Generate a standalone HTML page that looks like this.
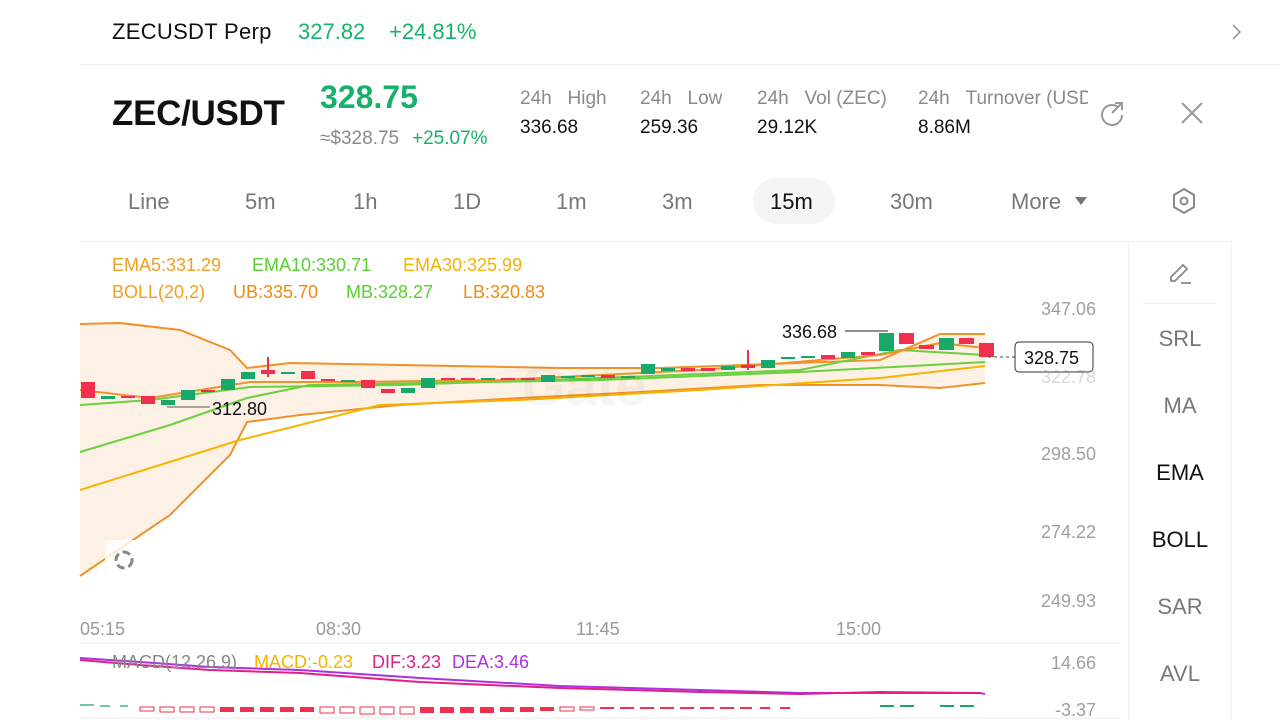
<!DOCTYPE html>
<html><head><meta charset="utf-8"><style>
*{margin:0;padding:0;box-sizing:border-box}
body{width:1280px;height:720px;background:#fff;font-family:"Liberation Sans",sans-serif;position:relative;overflow:hidden;color:#111}
.a{position:absolute;white-space:nowrap}
.g{color:#17b26a}
.gr{color:#8a8a8a}
.tab{position:absolute;top:189px;font-size:22px;color:#777}
.rp{position:absolute;left:1130px;width:100px;text-align:center;font-size:22px;color:#777}
</style></head><body>
<div class="a" style="left:112px;top:19px;font-size:22px;letter-spacing:0.3px">ZECUSDT Perp</div>
<div class="a g" style="left:298px;top:19px;font-size:22px">327.82</div>
<div class="a g" style="left:389px;top:19px;font-size:22px">+24.81%</div>
<svg class="a" style="left:1230px;top:23px" width="14" height="18"><path d="M3 2l7 7-7 7" stroke="#999" stroke-width="1.6" fill="none"/></svg>
<div class="a" style="left:80px;top:64px;width:1200px;height:1px;background:#eee"></div>
<div class="a" style="left:112px;top:94px;font-size:35px;font-weight:bold;letter-spacing:-0.3px">ZEC/USDT</div>
<div class="a g" style="left:320px;top:79px;font-size:32px;font-weight:bold">328.75</div>
<div class="a gr" style="left:320px;top:128px;font-size:19px">≈$328.75</div>
<div class="a g" style="left:412px;top:128px;font-size:19px">+25.07%</div>
<div class="a gr" style="left:520px;top:88px;font-size:19px">24h&nbsp;&nbsp;&nbsp;High</div>
<div class="a" style="left:520px;top:117px;font-size:19px">336.68</div>
<div class="a gr" style="left:640px;top:88px;font-size:19px">24h&nbsp;&nbsp;&nbsp;Low</div>
<div class="a" style="left:640px;top:117px;font-size:19px">259.36</div>
<div class="a gr" style="left:757px;top:88px;font-size:19px">24h&nbsp;&nbsp;&nbsp;Vol (ZEC)</div>
<div class="a" style="left:757px;top:117px;font-size:19px">29.12K</div>
<div class="a gr" style="left:918px;top:88px;font-size:19px;width:170px;overflow:hidden">24h&nbsp;&nbsp;&nbsp;Turnover (USDT)</div>
<div class="a" style="left:918px;top:117px;font-size:19px">8.86M</div>
<svg class="a" style="left:1098px;top:100px" width="28" height="28" fill="none" stroke="#999" stroke-width="2"><path d="M20 7A10 10 0 1 0 24 15"/><path d="M14 13L24 3M17 3h7v7"/></svg>
<svg class="a" style="left:1180px;top:101px" width="24" height="24" stroke="#999" stroke-width="2"><path d="M2 2l20 20M22 2L2 22"/></svg>
<div class="tab" style="left:128px">Line</div>
<div class="tab" style="left:245px">5m</div>
<div class="tab" style="left:353px">1h</div>
<div class="tab" style="left:453px">1D</div>
<div class="tab" style="left:556px">1m</div>
<div class="tab" style="left:662px">3m</div>
<div class="a" style="left:753px;top:178px;width:82px;height:46px;border-radius:23px;background:#f4f4f4"></div>
<div class="tab" style="left:770px;color:#111">15m</div>
<div class="tab" style="left:890px">30m</div>
<div class="tab" style="left:1011px">More</div>
<svg class="a" style="left:1075px;top:196px" width="12" height="10"><path d="M0 1h12L6 9z" fill="#777"/></svg>
<svg class="a" style="left:1170px;top:186px" width="28" height="30" fill="none" stroke="#888" stroke-width="2"><path d="M14 3l10 6v12l-10 6-10-6V9z"/><circle cx="14" cy="15" r="3.5"/></svg>
<div class="a" style="left:80px;top:241px;width:1152px;height:1px;background:#eee"></div>
<div class="a" style="left:1128px;top:241px;width:1px;height:479px;background:#eee"></div>
<div class="a" style="left:1231px;top:241px;width:1px;height:479px;background:#f2f2f2"></div>
<div class="a" style="left:1143px;top:303px;width:73px;height:1px;background:#eee"></div>
<svg class="a" style="left:1168px;top:260px" width="26" height="26" fill="none" stroke="#888" stroke-width="1.8"><path d="M3 21v-4L15 5l4 4L7 21z"/><path d="M13 23h10"/></svg>
<div class="rp" style="top:326px">SRL</div>
<div class="rp" style="top:393px">MA</div>
<div class="rp" style="top:460px;color:#111">EMA</div>
<div class="rp" style="top:527px;color:#111">BOLL</div>
<div class="rp" style="top:594px">SAR</div>
<div class="rp" style="top:661px">AVL</div>
<div class="a" style="left:112px;top:255px;font-size:18px;color:#f0a020">EMA5:331.29</div>
<div class="a" style="left:252px;top:255px;font-size:18px;color:#5ad030">EMA10:330.71</div>
<div class="a" style="left:403px;top:255px;font-size:18px;color:#f3b300">EMA30:325.99</div>
<div class="a" style="left:112px;top:282px;font-size:18px;color:#f0a020">BOLL(20,2)</div>
<div class="a" style="left:233px;top:282px;font-size:18px;color:#f08a10">UB:335.70</div>
<div class="a" style="left:346px;top:282px;font-size:18px;color:#5ad030">MB:328.27</div>
<div class="a" style="left:463px;top:282px;font-size:18px;color:#f08a10">LB:320.83</div>
<svg class="a" style="left:0;top:0" width="1128" height="720">
<path d="M80 324L120 323L180 330L230 350L247 368L290 363L400 365L560 368L660 368L880 360L940 334L985 334L985 383L940 388L880 385L760 385L640 392L520 398L400 405L300 415L247 422L230 455L170 515L80 576Z" fill="#fdf1e5"/>
<path d="M80 324L120 323L180 330L230 350L247 368L290 363L400 365L560 368L660 368L880 360L940 334L985 334" fill="none" stroke="#f0922a" stroke-width="2"/>
<path d="M80 576L170 515L230 455L247 422L300 415L400 405L520 398L640 392L760 385L880 385L940 388L985 383" fill="none" stroke="#f0922a" stroke-width="2"/>
<path d="M80 490L240 440L380 405L520 400L700 390L880 378L985 366" fill="none" stroke="#f6b300" stroke-width="2"/>
<path d="M80 452L170 425L247 398L310 385L600 380L800 372L985 362" fill="none" stroke="#6bd040" stroke-width="2"/>
<path d="M80 405L150 400L250 387L400 385L600 378L800 370L900 350L985 355" fill="none" stroke="#6bd040" stroke-width="2"/>
<path d="M80 390L150 398L250 382L350 382L500 380L700 370L880 355L940 343L985 348" fill="none" stroke="#f0922a" stroke-width="2"/>
<text x="522" y="405" font-size="56" font-weight="bold" fill="#000" opacity="0.03" font-family="Liberation Sans">Gate</text>
<g id="c">
<rect x="81" y="382" width="14" height="16" fill="#f0304e"/>
<rect x="101" y="396" width="14" height="3" fill="#17a86a"/>
<rect x="121" y="396" width="14" height="2" fill="#f0304e"/>
<rect x="141" y="396" width="14" height="8" fill="#f0304e"/>
<rect x="161" y="400" width="14" height="5" fill="#17a86a"/>
<rect x="181" y="390" width="14" height="10" fill="#17a86a"/>
<rect x="201" y="390" width="14" height="2" fill="#f0304e"/>
<rect x="221" y="379" width="14" height="11" fill="#17a86a"/>
<rect x="241" y="372" width="14" height="7" fill="#17a86a"/>
<rect x="261" y="370" width="14" height="4" fill="#f0304e"/><rect x="267" y="357" width="2" height="20" fill="#f0304e"/>
<rect x="281" y="372" width="14" height="2" fill="#17a86a"/>
<rect x="301" y="371" width="14" height="8" fill="#f0304e"/>
<rect x="321" y="379" width="14" height="2" fill="#f0304e"/>
<rect x="341" y="380" width="14" height="2" fill="#17a86a"/>
<rect x="361" y="380" width="14" height="8" fill="#f0304e"/>
<rect x="381" y="389" width="14" height="4" fill="#f0304e"/>
<rect x="401" y="388" width="14" height="5" fill="#17a86a"/>
<rect x="421" y="378" width="14" height="10" fill="#17a86a"/>
<rect x="441" y="378" width="14" height="2" fill="#f0304e"/>
<rect x="461" y="378" width="14" height="2" fill="#f0304e"/>
<rect x="481" y="378" width="14" height="2" fill="#17a86a"/>
<rect x="501" y="378" width="14" height="2" fill="#f0304e"/>
<rect x="521" y="378" width="14" height="2" fill="#f0304e"/>
<rect x="541" y="375" width="14" height="7" fill="#17a86a"/>
<rect x="561" y="376" width="14" height="2" fill="#17a86a"/>
<rect x="581" y="375" width="14" height="2" fill="#17a86a"/>
<rect x="601" y="375" width="14" height="3" fill="#f0304e"/>
<rect x="621" y="376" width="14" height="2" fill="#17a86a"/>
<rect x="641" y="364" width="14" height="10" fill="#17a86a"/>
<rect x="661" y="368" width="14" height="3" fill="#17a86a"/>
<rect x="681" y="368" width="14" height="3" fill="#f0304e"/>
<rect x="701" y="368" width="14" height="3" fill="#f0304e"/>
<rect x="721" y="366" width="14" height="4" fill="#17a86a"/>
<rect x="741" y="365" width="14" height="3" fill="#f0304e"/><rect x="747" y="350" width="2" height="20" fill="#f0304e"/>
<rect x="761" y="360" width="14" height="8" fill="#17a86a"/>
<rect x="781" y="357" width="14" height="2" fill="#17a86a"/>
<rect x="801" y="356" width="14" height="2" fill="#17a86a"/>
<rect x="821" y="355" width="14" height="4" fill="#f0304e"/>
<rect x="841" y="352" width="14" height="6" fill="#17a86a"/>
<rect x="861" y="352" width="14" height="3" fill="#f0304e"/>
<rect x="879" y="333" width="15" height="18" fill="#17a86a"/>
<rect x="899" y="333" width="15" height="11" fill="#f0304e"/>
<rect x="919" y="345" width="15" height="4" fill="#f0304e"/>
<rect x="939" y="338" width="15" height="12" fill="#17a86a"/>
<rect x="959" y="338" width="15" height="6" fill="#f0304e"/>
<rect x="979" y="343" width="15" height="14" fill="#f0304e"/>
</g>
<path d="M167 407H210" stroke="#555" stroke-width="1"/>
<text x="212" y="415" font-size="18" fill="#111">312.80</text>
<path d="M845 331H888" stroke="#222" stroke-width="1"/>
<text x="782" y="338" font-size="18" fill="#111">336.68</text>
<path d="M988 357H1015" stroke="#444" stroke-dasharray="3 3"/>
<rect x="1015" y="342" width="78" height="30" rx="4" fill="#fff" stroke="#333"/>
<text x="1024" y="364" font-size="18" fill="#111">328.75</text>
<g font-size="18" fill="#a0a0a0" text-anchor="end">
<text x="1096" y="315">347.06</text><text x="1096" y="383" opacity=".4">322.78</text><text x="1096" y="460">298.50</text><text x="1096" y="538">274.22</text><text x="1096" y="607">249.93</text>
<text x="1096" y="669">14.66</text><text x="1096" y="716">-3.37</text></g>
<g font-size="18" fill="#999"><text x="80" y="635">05:15</text><text x="316" y="635">08:30</text><text x="576" y="635">11:45</text><text x="836" y="635">15:00</text></g>
<rect x="105" y="540" width="38" height="38" rx="4" fill="#fff" opacity=".8"/>
<circle cx="124" cy="560" r="8" fill="none" stroke="#888" stroke-width="3" stroke-dasharray="8 4"/>
<path d="M80 643H1120" stroke="#eee"/>
<path d="M80 658L140 662L210 667L300 670L420 678L560 686L700 690L800 693L980 693L985 694" fill="none" stroke="#b030e0" stroke-width="2"/>
<path d="M80 660L140 665L210 670L300 673L420 682L560 688L700 692L800 694L880 692L980 693" fill="none" stroke="#e0208a" stroke-width="2"/>
<path d="M80 705h14M100 706h10M120 706h8" stroke="#17a86a" stroke-width="1.2"/>
<g fill="none" stroke="#f0304e"><rect x="140" y="707" width="14" height="4"/><rect x="160" y="707" width="14" height="5"/><rect x="180" y="707" width="14" height="5"/><rect x="200" y="707" width="14" height="5"/></g>
<g fill="#f0304e"><rect x="220" y="707" width="14" height="5"/><rect x="240" y="707" width="14" height="5"/><rect x="260" y="707" width="14" height="5"/><rect x="280" y="707" width="14" height="5"/><rect x="300" y="707" width="14" height="5"/></g>
<g fill="none" stroke="#f0304e"><rect x="320" y="707" width="14" height="6"/><rect x="340" y="707" width="14" height="6"/><rect x="360" y="707" width="14" height="7"/><rect x="380" y="707" width="14" height="7"/><rect x="400" y="707" width="14" height="7"/></g>
<g fill="#f0304e"><rect x="420" y="707" width="14" height="6"/><rect x="440" y="707" width="14" height="6"/><rect x="460" y="707" width="14" height="6"/><rect x="480" y="707" width="14" height="6"/><rect x="500" y="707" width="14" height="5"/><rect x="520" y="707" width="14" height="5"/><rect x="540" y="707" width="14" height="4"/></g>
<g fill="none" stroke="#f0304e"><rect x="560" y="707" width="14" height="4"/><rect x="580" y="707" width="14" height="3"/></g>
<path d="M600 708h14M620 708h14M640 708h14M660 708h14M680 708h14M700 708h14M720 708h14M740 708h12M760 708h10M780 708h10" stroke="#f0304e" stroke-width="2"/>
<path d="M880 706h14M900 706h14M940 706h14M960 706h14" stroke="#17a86a" stroke-width="2"/>
<path d="M80 718H1120" stroke="#eee"/>
</svg>
<div class="a" style="left:112px;top:652px;font-size:18px;color:#888">MACD(12,26,9)</div>
<div class="a" style="left:254px;top:652px;font-size:18px;color:#f3b300">MACD:-0.23</div>
<div class="a" style="left:372px;top:652px;font-size:18px;color:#e0208a">DIF:3.23</div>
<div class="a" style="left:452px;top:652px;font-size:18px;color:#b030e0">DEA:3.46</div>
</body></html>
